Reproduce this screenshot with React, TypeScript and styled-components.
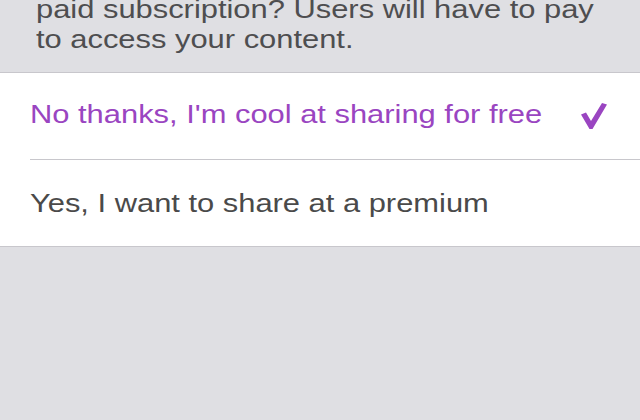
import React from "react";
import styled, { createGlobalStyle } from "styled-components";

const Global = createGlobalStyle`
  html, body {
    margin: 0;
    padding: 0;
    background: #dfdfe3;
    font-family: "Liberation Sans", Arial, Helvetica, sans-serif;
    -webkit-font-smoothing: antialiased;
  }
`;

const Screen = styled.div`
  width: 640px;
  height: 420px;
  overflow: hidden;
  background: #dfdfe3;
  display: flex;
  flex-direction: column;
`;

const Footer = styled.div`
  padding: 0 0 18px 36px;
  border-bottom: 1px solid #c8c7cc;
`;

const Wide = styled.span`
  display: inline-block;
  white-space: nowrap;
  transform: scaleX(1.235);
  transform-origin: left center;
`;

const FooterText = styled.div`
  margin-top: -6px;
  font-size: 25px;
  line-height: 30px;
  color: #4e4e50;
`;

const List = styled.div`
  background: #ffffff;
  padding-left: 30px;
  border-bottom: 1px solid #c8c7cc;
`;

const Row = styled.div<{ $last?: boolean }>`
  display: flex;
  align-items: center;
  justify-content: space-between;
  height: 86px;
  padding-right: 33px;
  border-bottom: ${(p) => (p.$last ? "none" : "1px solid #c8c7cc")};
`;

const Label = styled.div<{ $selected?: boolean }>`
  font-size: 25px;
  line-height: 30px;
  margin-top: ${(p) => (p.$selected ? "-5px" : "0")};
  color: ${(p) => (p.$selected ? "#9a45c1" : "#4a4a4a")};
`;

const Check = styled.svg`
  width: 26px;
  height: 27px;
  flex: none;
`;

const options = [
  { label: "No thanks, I'm cool at sharing for free", selected: true },
  { label: "Yes, I want to share at a premium", selected: false },
];

export default function App() {
  return (
    <>
      <Global />
      <Screen>
        <Footer>
          <FooterText>
            <Wide>paid subscription? Users will have to pay</Wide>
            <br />
            <Wide>to access your content.</Wide>
          </FooterText>
        </Footer>
        <List>
          {options.map((o, i) => (
            <Row key={o.label} $last={i === options.length - 1}>
              <Label $selected={o.selected}>
                <Wide>{o.label}</Wide>
              </Label>
              {o.selected && (
                <Check viewBox="0 0 26 27">
                  <polygon
                    points="0,11.5 5,9.5 10,18 21,0 26,1.5 11.5,26 8.5,26"
                    fill="#9a45c1"
                  />
                </Check>
              )}
            </Row>
          ))}
        </List>
      </Screen>
    </>
  );
}
